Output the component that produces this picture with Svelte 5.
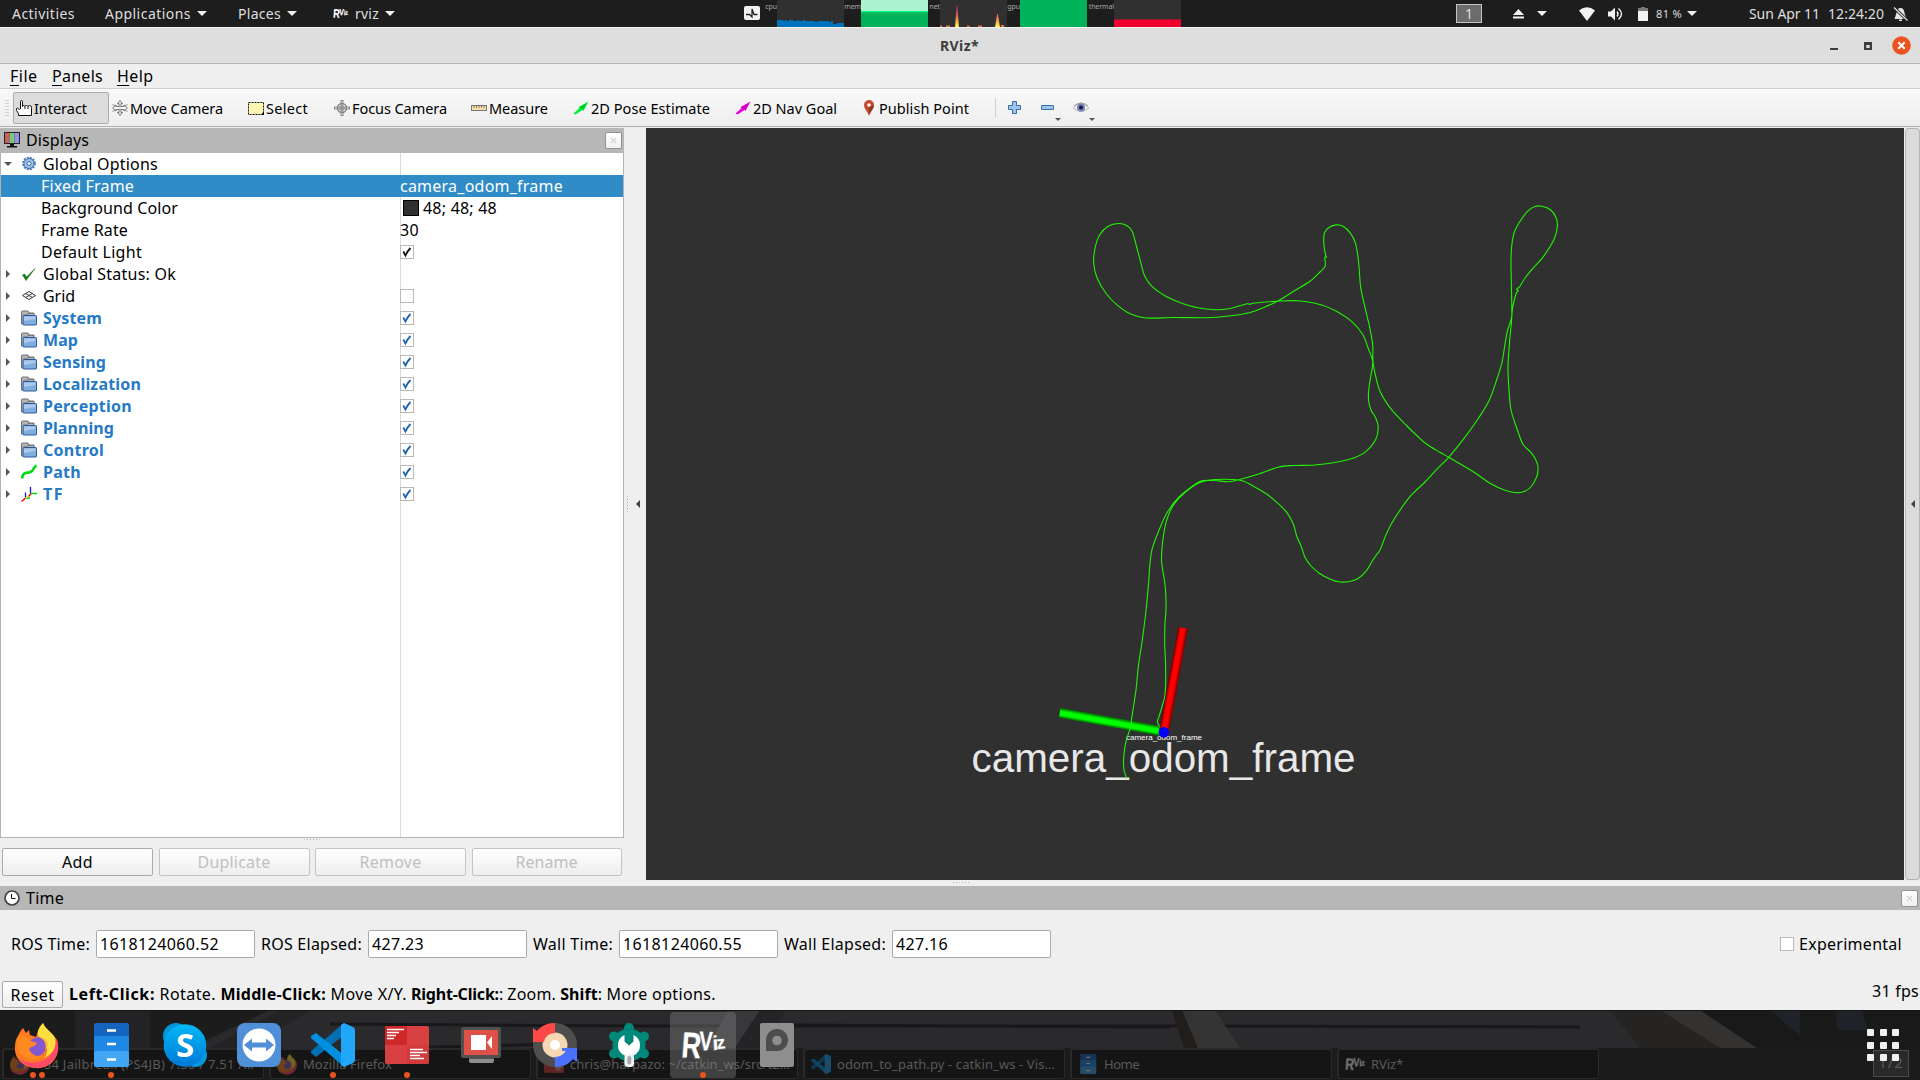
<script>
  function fit(node, width) {
    const natural = node.getBoundingClientRect().width;
    const count = node.textContent.length;
    if (width && count) node.style.letterSpacing = `${(width - natural) / count}px`;
  }

  const tools = [
    { id: 'hand', label: 'Interact', w: 53, box: 96 },
    { id: 'move', label: 'Move Camera', w: 93, box: 136 },
    { id: 'select', label: 'Select', w: 42, box: 86 },
    { id: 'focus', label: 'Focus Camera', w: 95, box: 137 },
    { id: 'ruler', label: 'Measure', w: 59, box: 102 },
    { id: 'pose', label: '2D Pose Estimate', w: 119, box: 162 },
    { id: 'goal', label: '2D Nav Goal', w: 84, box: 126 },
    { id: 'pin', label: 'Publish Point', w: 90, box: 137 }
  ];

  const rows = [
    { label: 'Global Options', w: 115, icon: 'gear', open: true },
    { label: 'Fixed Frame', w: 93, child: true, value: 'camera_odom_frame', vw: 163, selected: true },
    { label: 'Background Color', w: 137, child: true, value: '48; 48; 48', vw: 74, swatch: true },
    { label: 'Frame Rate', w: 87, child: true, value: '30', vw: 19 },
    { label: 'Default Light', w: 101, child: true, check: 'dark' },
    { label: 'Global Status: Ok', w: 133, icon: 'ok' },
    { label: 'Grid', w: 32, icon: 'grid', check: 'empty' },
    { label: 'System', w: 59, icon: 'folder', check: 'blue', bold: true },
    { label: 'Map', w: 35, icon: 'folder', check: 'blue', bold: true },
    { label: 'Sensing', w: 63, icon: 'folder', check: 'blue', bold: true },
    { label: 'Localization', w: 98, icon: 'folder', check: 'blue', bold: true },
    { label: 'Perception', w: 89, icon: 'folder', check: 'blue', bold: true },
    { label: 'Planning', w: 71, icon: 'folder', check: 'blue', bold: true },
    { label: 'Control', w: 61, icon: 'folder', check: 'blue', bold: true },
    { label: 'Path', w: 38, icon: 'path', check: 'blue', bold: true },
    { label: 'TF', w: 21, icon: 'tf', check: 'blue', bold: true }
  ];

  const times = [
    { label: 'ROS Time:', w: 79, value: '1618124060.52', vw: 119 },
    { label: 'ROS Elapsed:', w: 101, value: '427.23', vw: 52 },
    { label: 'Wall Time:', w: 80, value: '1618124060.55', vw: 119 },
    { label: 'Wall Elapsed:', w: 102, value: '427.16', vw: 52 }
  ];

  const tasks = [
    { icon: 'firefox', label: 'PS4 Jailbreak (PS4JB) 7.50 / 7.51 /…', w: 218 },
    { icon: 'firefox', label: 'Mozilla Firefox', w: 89 },
    { icon: 'term', label: 'chris@harpazo: ~/catkin_ws/src/t2…', w: 220 },
    { icon: 'code', label: 'odom_to_path.py - catkin_ws - Vis…', w: 218 },
    { icon: 'files', label: 'Home', w: 35 },
    { icon: 'rviz', label: 'RViz*', w: 32 }
  ];

  const dock = [
    { icon: 'firefox', dots: 2 },
    { icon: 'files', dots: 1 },
    { icon: 'skype', dots: 0 },
    { icon: 'teamviewer', dots: 0 },
    { icon: 'code', dots: 1 },
    { icon: 'term', dots: 1 },
    { icon: 'recorder', dots: 0 },
    { icon: 'sync', dots: 0 },
    { icon: 'tweak', dots: 0 },
    { icon: 'rviz', dots: 1, active: true },
    { icon: 'disk', dots: 0 }
  ];

  const cpu = [7, 7, 7, 6, 7, 6, 7, 7, 6, 6, 7, 6, 6, 7, 6, 6, 6, 6, 6, 5, 6, 6, 6, 6, 6, 6, 5, 6, 3, 3, 4, 4, 4];
  const cpuPath = 'M0 27' + cpu.map((v, i) => `L${i * 2} ${27 - v}L${i * 2 + 2} ${27 - v}`).join('') + 'L67 23V27Z';

  const track = [
    1163,730, 1158.7,725, 1157.5,721.5, 1159.5,715, 1162.5,705, 1164.7,697, 1165.7,682, 1165.5,663, 1164.7,643, 1165,623,
    1166,610, 1165.7,593, 1164.7,582, 1162.7,570, 1161.5,560, 1162.3,545, 1164,532, 1166.7,520, 1171.7,508,
    1178.3,499, 1186.7,491, 1196.7,484, 1205,481, 1215,479.5, 1233,479.5, 1243,481, 1253,486, 1266.7,494,
    1276.7,502.3, 1286.7,512.3, 1293.3,524, 1296.7,536, 1301.3,546.7, 1305,557.3, 1311,566, 1320,573.7,
    1330,579, 1338.3,581.8, 1348.3,581.7, 1357.7,578.7, 1366.7,570.3, 1373.3,559.3, 1380,550, 1385,537.3,
    1391.7,523.3, 1401.7,507.7, 1411.7,494.7, 1425,482, 1436.7,469.3, 1448.7,457.3, 1464.6,437.7,
    1478.4,418.3, 1489.4,400, 1496.6,380, 1501.8,363.3, 1504.6,346.7, 1507.3,331.7, 1511.4,318.3,
    1512.8,306.7, 1516.3,293, 1518.5,290.500, 1516.500,289.500, 1519.7,286.7, 1524.9,278.3, 1533.5,267.7, 1542,258.3, 1549,248.3,
    1554.5,238.3, 1557.4,226, 1555.9,217.3, 1550.7,210, 1542,206.3, 1535,206.5, 1528.3,210.7, 1520.4,220.7,
    1514.5,231.7, 1511.8,245, 1511,260, 1511.4,286.7, 1511.8,316.7, 1509.7,340, 1508,366.7, 1509,390,
    1511,410, 1516.3,426.7, 1523,444.3, 1531.8,453.3, 1537.3,463.3, 1538,470, 1536.7,476.7, 1531.7,486,
    1525,491.3, 1516.7,492.7, 1505,490.3, 1490,483.3, 1473.3,471.7, 1448.7,457.3, 1440,452.3, 1426.7,444.3,
    1418.3,437, 1406,425, 1390.6,408.3, 1380.2,391.7, 1375.4,375, 1373,361.7, 1372.7,345, 1369.9,328.3,
    1364.8,306.7, 1360.6,286.7, 1358.6,261.7, 1355.5,243.3, 1350,232.7, 1343,226.3, 1336.5,224.9,
    1329.3,227.3, 1324.5,232.7, 1323.8,243.3, 1325.5,255, 1326.5,257, 1324.8,257.3, 1325.2,266, 1320,272,
    1310.3,281, 1294,291, 1278,301, 1263.2,307.7, 1249.4,312.7, 1228.7,316, 1206.3,317.7, 1173.6,317.5,
    1146,318, 1130.6,314, 1117.9,305.7, 1106.5,294, 1097.2,278.3, 1093.7,263.3, 1095,248.3, 1099.6,235,
    1108.2,226.3, 1118.5,223.5, 1127,225.7, 1132.3,231.7, 1136.4,246, 1141,263.3, 1145,276.7, 1153,287.3,
    1166.7,296.7, 1180.5,302.7, 1197.7,307.7, 1215,309.7, 1228.7,308.7, 1247,303.7, 1250,304.3, 1252.8,303.3,
    1280.4,301, 1301,301, 1321.7,305, 1339,312.7, 1352.7,322.3, 1363,335, 1368.2,348.3, 1372.7,361.7,
    1371,375, 1368.9,388.3, 1368.5,400, 1371,410, 1375.4,417.3, 1378.2,426.7, 1375.8,439.3, 1365.8,451.7,
    1354.4,457.7, 1339,461.7, 1314.8,465, 1294,465.5, 1278.7,467, 1258,474.3, 1241.5,479, 1228.7,481.7,
    1215,480.5, 1201.7,480.9, 1191.7,486.7, 1178.3,497.7, 1167.3,512.3, 1160,527.7, 1152.3,548.3,
    1150,563.3, 1148.3,586.7, 1145.7,613.3, 1142.3,640, 1138.3,666.7, 1136,690, 1131.7,718.3, 1130.7,726.7,
    1126,741.7, 1123.7,756.7, 1124,770, 1126.7,778.3
  ];

  // Catmull-Rom spline through the positions, written as cubic segments.
  function spline(flat) {
    const p = [];
    for (let i = 0; i < flat.length; i += 2) p.push([flat[i], flat[i + 1]]);
    let d = `M${p[0][0]} ${p[0][1]}`;
    for (let i = 0; i < p.length - 1; i++) {
      const a = p[Math.max(i - 1, 0)], b = p[i], c = p[i + 1], e = p[Math.min(i + 2, p.length - 1)];
      const seg = Math.hypot(c[0] - b[0], c[1] - b[1]);
      const t1 = Math.min(1 / 6, seg / 3 / (Math.hypot(c[0] - a[0], c[1] - a[1]) || 1));
      const t2 = Math.min(1 / 6, seg / 3 / (Math.hypot(e[0] - b[0], e[1] - b[1]) || 1));
      d += `C${(b[0] + (c[0] - a[0]) * t1).toFixed(2)} ${(b[1] + (c[1] - a[1]) * t1).toFixed(2)} ` +
        `${(c[0] - (e[0] - b[0]) * t2).toFixed(2)} ${(c[1] - (e[1] - b[1]) * t2).toFixed(2)} ${c[0]} ${c[1]}`;
    }
    return d;
  }
  const trackPath = spline(track);
</script>

{#snippet appIcon(kind)}
  <svg class="app-icon" viewBox="0 0 44 44">
    {#if kind === 'firefox'}
      <path d="M3 13C5 9 6 7 8 5L11 10L14 7L15 12L21 14L23 8L28 0C30 6 37 9 42 17C46 29 40 45 22 45C8 45 -1 35 0 24C0 19 1 16 3 13Z" fill="#ff7a22" />
      <path d="M42 17C46 30 38 45 22 45C14 45 7 41 3 35C14 43 30 40 36 31C41 24 40 14 42 17Z" fill="#ff4a67" />
      <path d="M28 0C22 6 21 12 26 16C33 22 34 29 29 35C38 31 42 24 40 15C37 9 31 7 28 0Z" fill="#ffde3f" />
      <path d="M14 20C18 13 27 12 30 19C33 26 28 33 22 33C16 32 12 28 13 23Z" fill="#8557cf" />
      <path d="M3 14C8 12 14 13 16 18L22 20C20 24 16 23 14 26C16 31 20 34 27 33C21 39 9 36 4 29C2 24 1 18 3 14Z" fill="#ff8a20" />
      <path d="M24 14C30 16 32 22 30 27C36 22 33 15 24 14Z" fill="#ffb92e" />
    {:else if kind === 'files'}
      <rect x="5" y="0" width="35" height="44" rx="2" fill="#1565c0" />
      <path d="M5 15Q5 13 7 13H38Q40 13 40 15V30H5Z" fill="#1e88e5" />
      <path d="M5 30Q5 28 7 28H38Q40 28 40 30V42Q40 44 38 44H7Q5 44 5 42Z" fill="#42a5f5" />
      <path d="M18 7.500H27M18 21H27M18 36.500H27" stroke="#fff" stroke-width="2.500" />
    {:else if kind === 'skype'}
      <defs><linearGradient id="skype" x2="0" y2="1"><stop offset="0" stop-color="#00b8f5" /><stop offset="1" stop-color="#0078d7" /></linearGradient></defs>
      <circle cx="13" cy="13" r="13" fill="#0094d8" /><circle cx="32" cy="32" r="12" fill="#009ade" />
      <circle cx="22" cy="22.500" r="21.300" fill="url(#skype)" />
      <text x="22" y="34" text-anchor="middle" class="skype-s">S</text>
    {:else if kind === 'teamviewer'}
      <rect width="44" height="44" rx="8" fill="#5090d8" /><circle cx="22" cy="22" r="16.500" fill="#fff" />
      <path d="M7 22L15 15.500V19.500H29V15.500L37 22L29 28.500V24.500H15V28.500Z" fill="#5090d8" />
    {:else if kind === 'code'}
      <path d="M33 0V12L5 34L0 30V28Z" fill="#0070b3" /><path d="M0 15V13L5 10L33 32V44Z" fill="#0090df" />
      <path d="M33 0L42 4Q44 5 44 7V37Q44 39 42 40L33 44L30 42V2Z" fill="#21a7f7" />
    {:else if kind === 'term'}
      <rect y="3" width="44" height="38" rx="2" fill="#d84042" /><path d="M0 5Q0 3 2 3H22V22H0Z" fill="#cf2829" />
      <path d="M22 22H44V39Q44 41 42 41H22Z" fill="#d13b3b" />
      <path d="M2 6.500H19M2 9.500H14M2 12.500H11M2 15.500H9M25 26.500H38M25 29.500H42M25 32.500H35M25 35.500H39" stroke="#fff" stroke-width="1.400" />
    {:else if kind === 'recorder'}
      <rect x="2" y="4" width="40" height="31" rx="2" fill="#505050" /><rect x="5" y="7" width="34" height="25" fill="#de5148" />
      <path d="M12 12H27V27H12ZM28 19.500L33 13V26Z" fill="#fff" /><path d="M10 35.500H35V38Q35 40 33 40H12Q10 40 10 38Z" fill="#8e8e8e" />
    {:else if kind === 'sync'}
      <circle cx="22" cy="22" r="17" fill="none" stroke="#4e4e4e" stroke-width="10" />
      <circle cx="22" cy="22" r="12.500" fill="#f5d7b4" /><circle cx="22" cy="22" r="5" fill="#fff" />
      <path d="M22 0V10C17 10 12 13 11 19H0V5L4 8C8 3 14 0 22 0Z" fill="#ff4848" />
      <path d="M22 44V34C27 34 31 31 33 28H29V25H44V39L40 36C36 41 30 44 22 44Z" fill="#4a70ff" />
    {:else if kind === 'tweak'}
      <circle cx="22" cy="22" r="16.500" fill="#00897b" />
      <path d="M22 5V39M7 13.500L37 30.500M7 30.500L37 13.500" stroke="#00897b" stroke-width="10" stroke-linecap="round" />
      <path d="M17.500 12V18.500L22 22.500L26.500 18.500V12A11.300 11.300 0 0 1 26.500 32.500L25.500 33.500H18.500L17.500 32.500A11.300 11.300 0 0 1 17.500 12Z" fill="#fff" />
      <rect x="17.500" y="31" width="9.500" height="13" rx="3.500" fill="#f2f2f2" /><rect x="20.300" y="33" width="4" height="8.500" rx="2" fill="#aaa" />
    {:else if kind === 'rviz'}
      <g class="rviz-shadow"><text transform="translate(-1 35) rotate(4) scale(.82 1.1)" font-size="33">R</text><text transform="translate(17 28) rotate(2) scale(.75 1)" font-size="27">V</text><text transform="translate(31 28) rotate(-3)" font-size="20">i</text><text transform="translate(35 27) rotate(-6)" font-size="18">z</text></g>
      <g class="rviz-face"><text transform="translate(0 34) rotate(4) scale(.82 1.1)" font-size="33">R</text><text transform="translate(18 27) rotate(2) scale(.75 1)" font-size="27">V</text><text transform="translate(32 27) rotate(-3)" font-size="20">i</text><text transform="translate(36 26) rotate(-6)" font-size="18">z</text></g>
    {:else if kind === 'disk'}
      <rect x="5" width="34" height="44" rx="2" fill="#8e8e8e" /><path d="M11 28V17A11 11 0 1 1 22 28Z" fill="#4d4d4d" /><circle cx="22" cy="17.500" r="4.800" fill="#8e8e8e" />
    {/if}
  </svg>
{/snippet}

{#snippet toolIcon(kind)}
  <svg class="tool-icon" viewBox="0 0 16 16">
    {#if kind === 'hand'}
      <path d="M4.500 9V1.500Q4.500.5 5.500.5T6.500 1.500V6.500L7.500 5L9 6.500L10.500 5L12 6.500L13.500 5.500Q15.500 5.500 15.500 7.500V15.500H2.500V13.500L.5 10.500V8.500Q1.500 7.500 2.500 8.500L3.500 10M9 6.500V9M12 6.500V9" fill="#fff" stroke="#111" />
    {:else if kind === 'move'}
      <g fill="#f4f4f4" stroke="#666" stroke-width=".9"><path d="M8 .5L10.500 3.500H9V6.500H12V5L15.500 8L12 11V9.500H9V12.500H10.500L8 15.500L5.500 12.500H7V9.500H4V11L.5 8L4 5V6.500H7V3.500H5.500Z" /><path d="M.5 4.500Q8 9 15.500 4.500M.5 11.500Q8 7 15.500 11.500" fill="none" stroke="#888" /></g>
    {:else if kind === 'select'}
      <rect x=".5" y="2.500" width="15" height="12" fill="#fdf6b2" stroke="#111" stroke-dasharray="2 1" /><path d="M16 11V15H13Z" />
    {:else if kind === 'focus'}
      <g fill="none" stroke="#888"><path d="M8 0V16M0 8H16" stroke-width="3" /><path d="M8 1V15M1 8H15" stroke="#f2f2f2" /><circle cx="8" cy="8" r="4.500" stroke-width="1.500" /><path d="M5 8H11M8 5V11" stroke="#777" /></g>
    {:else if kind === 'ruler'}
      <rect x=".5" y="5.500" width="15" height="5" fill="#f5dfa5" stroke="#777" /><path d="M3 5V8M5.500 5V8M8 5V8M10.500 5V8M13 5V8" stroke="#666" stroke-width=".8" />
    {:else if kind === 'pose' || kind === 'goal'}
      <g fill={kind === 'pose' ? '#00f03a' : '#f000e0'}><path d="M.5 13.500L6.500 8L5.500 7L15.500 1.500L10.500 11L9.500 10L2.500 14.500Z" /></g><path d="M6 8L14 3L10 9Z" opacity=".2" />
    {:else if kind === 'pin'}
      <path d="M8 16C7 12 3 9 3 5A5 5 0 0 1 13 5C13 9 9 12 8 16Z" fill="#c9492f" /><path d="M8 15C10 11 12.500 9 13 5L8 7Z" fill="#8b3c24" /><circle cx="8" cy="5" r="1.800" fill="#fff" />
    {/if}
  </svg>
{/snippet}

{#snippet rowIcon(kind)}
  <svg class="row-icon" viewBox="0 0 16 16">
    {#if kind === 'gear'}
      <circle cx="8" cy="7.500" r="5.800" fill="none" stroke="#4a78b5" stroke-width="2" stroke-dasharray="2 1.040" /><circle cx="8" cy="7.500" r="5" fill="#9fc0e8" stroke="#4573ad" /><circle cx="8" cy="7.500" r="2" fill="#e8f0fa" stroke="#4573ad" />
    {:else if kind === 'ok'}
      <path d="M1.500 9L5 14.500L14 2.500L5.500 11L3.500 8Z" fill="#187818" stroke="#187818" stroke-width=".6" />
    {:else if kind === 'grid'}
      <path d="M1.500 7.500L8 3.500L14.500 7.500L8 11.500ZM4.700 5.500L11.300 9.500M4.700 9.500L11.300 5.500" fill="none" stroke="#333" />
    {:else if kind === 'folder'}
      <path d="M.5 14V2Q.5 1 1.500 1H7L8 3H13V14Z" fill="#b5b5b5" stroke="#666" stroke-width=".9" /><path d="M2 5H6L7 3.500H13" fill="none" stroke="#777" />
      <rect x="2" y="5.500" width="13.500" height="9.500" rx=".7" fill="#81acde" stroke="#2b5b9d" /><path d="M3 6.500H14.500V9L3 11Z" fill="#adcaed" />
    {:else if kind === 'path'}
      <path d="M1 14.500C2 8 5 9 8 8.500C13 8 12 3 15.500 1.500" fill="none" stroke="#00da10" stroke-width="2.600" />
    {:else if kind === 'tf'}
      <g fill="none" stroke-width="1.300"><path d="M9.500 7V1M4.500 11.500V6.500" stroke="#1515d8" /><path d="M9.500 7.500H16M4.500 12H9" stroke="#00d800" /><path d="M10 7.500L7.500 10.500M4.500 12L.5 15.500" stroke="#e00" /><path d="M7.500 10.500L4.500 12" stroke="#f0d000" /></g>
    {/if}
  </svg>
{/snippet}

<div class="screen">
  <header class="topbar">
    <nav class="top-menu">
      <span class="activities"><span use:fit={63}>Activities</span></span>
      <span class="top-item apps"><span use:fit={86}>Applications</span><i class="caret"></i></span>
      <span class="top-item places"><span use:fit={43}>Places</span><i class="caret"></i></span>
      <span class="top-item current"><span class="mini-logo">{@render appIcon('rviz')}</span><span use:fit={24}>rviz</span><i class="caret"></i></span>
    </nav>
    <div class="monitors">
      <svg class="pulse" viewBox="0 0 16 14"><rect width="16" height="14" rx="2" fill="#f2f2f2" /><path d="M2 8.500H5.500L8 11V3L10 8.500H13.500" fill="none" stroke="#222" stroke-width="1.300" /></svg>
      <span class="metric m-cpu">cpu</span>
      <svg class="graph" viewBox="0 0 67 27"><rect width="67" height="27" fill="#303030" /><path d={cpuPath} fill="#0072bc" /></svg>
      <span class="metric m-mem">mem</span>
      <svg class="graph" viewBox="0 0 67 27"><rect width="67" height="27" fill="#aaf5d0" /><rect y="11.500" width="67" height="16" fill="#00b35b" /><rect y="11" width="67" height="1.300" fill="#00ff82" /></svg>
      <span class="metric m-net">net</span>
      <svg class="graph" viewBox="0 0 67 27"><defs><linearGradient id="net" x2="0" y2="1"><stop offset="0" stop-color="#7a2060" /><stop offset=".5" stop-color="#f26d4f" /><stop offset="1" stop-color="#fff44f" /></linearGradient></defs><rect width="67" height="27" fill="#303030" /><path d="M15.500 27L17 5L18.500 27ZM55.500 27L57.500 14L59.500 27Z" fill="url(#net)" stroke="url(#net)" stroke-width=".8" /><path d="M0 25.500H2V27H0ZM6 25.500H10V27H6ZM27 25.500H29.500V27H27ZM38 25.500H42V27H38ZM61 25H64V27H61Z" fill="#f26d4f" /></svg>
      <span class="metric m-gpu">gpu</span>
      <svg class="graph" viewBox="0 0 67 27"><rect width="67" height="27" fill="#00b35b" /></svg>
      <span class="metric m-thermal">thermal</span>
      <svg class="graph" viewBox="0 0 67 27"><rect width="67" height="27" fill="#303030" /><rect y="19.500" width="67" height="7.500" fill="#f2002e" /></svg>
    </div>
    <div class="status">
      <span class="workspace">1</span>
      <svg class="eject" viewBox="0 0 11 10"><path d="M5.500 0L11 6H0ZM0 7.500H11V9.500H0Z" fill="#f2f2f2" /></svg>
      <i class="caret c1"></i>
      <svg class="wifi" viewBox="0 0 16 14"><path d="M0 3.500Q8-3 16 3.500L8 14Z" fill="#f2f2f2" /></svg>
      <svg class="volume" viewBox="0 0 15 14"><path d="M0 4.500H3L7 .5V13.500L3 9.500H0Z" fill="#f2f2f2" /><path d="M9 4.500Q11 7 9 9.500M10.500 1.500Q16.500 7 10.500 12.500" fill="none" stroke="#f2f2f2" stroke-width="1.400" /></svg>
      <svg class="battery" viewBox="0 0 10 14"><path d="M0 1H3V0H7V1H10V4H0Z" fill="#777" /><rect y="4" width="10" height="10" fill="#f2f2f2" /></svg>
      <span class="percent"><span use:fit={26}>81 %</span></span>
      <i class="caret c2"></i>
      <span class="clock"><span use:fit={71}>Sun Apr 11</span><span use:fit={56}>12:24:20</span></span>
      <svg class="bell" viewBox="0 0 15 14"><path d="M7.500 1Q11 1 11.500 6L13.500 12H1.500L3.500 6Q4 1 7.500 1ZM6 12.500H9V14H6Z" fill="#e5e5e5" /><path d="M1 .5L14.500 13.500" stroke="#1d1d1d" stroke-width="3" /><path d="M1 .5L14.500 13.500" stroke="#e5e5e5" stroke-width="1.200" /></svg>
    </div>
  </header>

  <div class="titlebar">
    <span class="win-title"><span use:fit={39}>RViz*</span></span>
    <div class="win-buttons">
      <svg class="wb-min" viewBox="0 0 8 8"><rect y="6" width="8" height="2" fill="#3d3d3d" /></svg>
      <svg class="wb-max" viewBox="0 0 8 8"><path d="M0 0H8V8H0ZM2.300 3V6H5.700V3Z" fill="#3d3d3d" fill-rule="evenodd" /></svg>
      <svg class="wb-close" viewBox="0 0 19 19"><circle cx="9.500" cy="9.500" r="9.300" fill="#e95420" /><path d="M6.300 6.300L12.700 12.700M12.700 6.300L6.300 12.700" stroke="#fff" stroke-width="2" /></svg>
    </div>
  </div>

  <nav class="menubar">
    <span class="m1"><span use:fit={27.5}><u>F</u>ile</span></span>
    <span class="m2"><span use:fit={51}><u>P</u>anels</span></span>
    <span class="m3"><span use:fit={36.5}><u>H</u>elp</span></span>
  </nav>

  <div class="toolbar">
    <span class="grip"></span>
    {#each tools as t, i}
      <div class="tool" class:pressed={i === 0} style:width="{t.box}px">
        {@render toolIcon(t.id)}<span use:fit={t.w}>{t.label}</span>
      </div>
    {/each}
    <span class="tool-sep"></span>
    <svg class="t-plus" viewBox="0 0 13 13"><path d="M4.500.5H8.500V4.500H12.500V8.500H8.500V12.500H4.500V8.500H.5V4.500H4.500Z" fill="#9cc4ec" stroke="#376daa" /></svg>
    <svg class="t-minus" viewBox="0 0 24 20"><rect x=".5" y="4.500" width="12" height="4" rx=".5" fill="#9cc4ec" stroke="#376daa" /><path d="M14 17H20L17 20Z" fill="#555" /></svg>
    <svg class="t-eye" viewBox="0 0 24 20"><path d="M0 7Q8-3 16 7Q8 14 0 7Z" fill="#eee" stroke="#bbb" /><circle cx="8" cy="6.500" r="4" fill="#7180bc" /><circle cx="8" cy="6.500" r="2" fill="#171b35" /><path d="M1 5Q8-1 15 5" fill="none" stroke="#999" /><path d="M16 17H22L19 20Z" fill="#555" /></svg>
  </div>

  <main class="workarea">
    <section class="displays">
      <div class="panel-title">
        <svg class="monitor" viewBox="0 0 16 16"><rect x=".5" y=".5" width="15" height="11" fill="#111" stroke="#222" /><rect x="1" y="1" width="5" height="10" fill="#be6464" /><rect x="6" y="1" width="4.500" height="10" fill="#78cb79" /><rect x="10.500" y="1" width="4.500" height="10" fill="#9292e6" /><path d="M6 12H10V14H13V15.500H3V14H6Z" fill="#111" /></svg>
        <span class="pt-text" use:fit={63}>Displays</span>
        <span class="close-btn"><svg viewBox="0 0 7 7"><path d="M1 1L6 6M6 1L1 6" stroke="#d4d4d4" stroke-width="1.300" /></svg></span>
      </div>
      <div class="tree">
        {#each rows as r}
          <div class="row" class:selected={r.selected} class:bold={r.bold}>
            <div class="name" class:child={r.child}>
              {#if !r.child}
                <i class="expander" class:open={r.open}></i>{@render rowIcon(r.icon)}
              {/if}
              <span use:fit={r.w}>{r.label}</span>
            </div>
            <div class="value">
              {#if r.swatch}<i class="swatch"></i>{/if}
              {#if r.value}<span class="vtext" use:fit={r.vw}>{r.value}</span>{/if}
              {#if r.check}
                <i class="checkbox">
                  {#if r.check !== 'empty'}
                    <svg viewBox="0 0 12 12"><path d="M2.300 5.500L4.500 9.500Q6.500 5 9.500 2" fill="none" stroke={r.check === 'dark' ? '#111' : '#1f62ad'} stroke-width="1.800" /></svg>
                  {/if}
                </i>
              {/if}
            </div>
          </div>
        {/each}
        <div class="row filler"><div class="name"></div><div class="value"></div></div>
      </div>
      <span class="h-grip"></span>
      <div class="buttons">
        <span class="btn"><span use:fit={31}>Add</span></span>
        <span class="btn off"><span use:fit={73}>Duplicate</span></span>
        <span class="btn off"><span use:fit={62}>Remove</span></span>
        <span class="btn off"><span use:fit={62}>Rename</span></span>
      </div>
    </section>
    <div class="splitter"><span class="v-grip"></span><i class="left-arrow"></i></div>
    <svg class="view" viewBox="646 128 1258 752">
      <defs>
        <linearGradient id="red" x2="0" y2="1"><stop offset="0" stop-color="#600" /><stop offset=".3" stop-color="#f00" /><stop offset=".65" stop-color="#f00" /><stop offset="1" stop-color="#700" /></linearGradient>
        <linearGradient id="green" x2="0" y2="1"><stop offset="0" stop-color="#060" /><stop offset=".3" stop-color="#0f0" /><stop offset=".65" stop-color="#0f0" /><stop offset="1" stop-color="#060" /></linearGradient>
      </defs>
      <rect x="646" y="128" width="1258" height="752" fill="#303030" />
      <rect x="0" y="-5" width="106" height="10" fill="url(#green)" transform="translate(1164 731.700) rotate(190.300)" />
      <text class="frame-big" x="971.500" y="771.500" textLength="384">camera_odom_frame</text>
      <text class="frame-small" x="1126" y="740" textLength="76">camera_odom_frame</text>
      <path d={trackPath} fill="none" stroke="#1ff500" stroke-width="1.100" />
      <rect x="0" y="-5" width="105.500" height="10" fill="url(#red)" transform="translate(1164 731.700) rotate(-79.600)" />
      <circle cx="1163.800" cy="732.200" r="5.300" fill="#00f" />
    </svg>
    <div class="right-strip"><i class="left-arrow"></i></div>
  </main>

  <div class="mid-gap"><span class="h-grip"></span></div>

  <section class="time">
    <div class="panel-title">
      <svg class="monitor" viewBox="0 0 16 16"><circle cx="8" cy="8" r="7" fill="#fff" stroke="#444" stroke-width="1.700" /><path d="M7.500 4V8.500H11.500" fill="none" stroke="#111" /></svg>
      <span class="pt-text" use:fit={38}>Time</span>
      <span class="close-btn"><svg viewBox="0 0 7 7"><path d="M1 1L6 6M6 1L1 6" stroke="#d4d4d4" stroke-width="1.300" /></svg></span>
    </div>
    <div class="time-row">
      {#each times as t}
        <label class="tlabel"><span use:fit={t.w}>{t.label}</span></label>
        <span class="field"><span use:fit={t.vw}>{t.value}</span></span>
      {/each}
      <span class="experimental"><i class="checkbox"></i><span use:fit={103}>Experimental</span></span>
    </div>
    <div class="footer">
      <span class="reset"><span use:fit={44}>Reset</span></span>
      <span class="hint"><span use:fit={86}><b>Left-Click:</b></span><span use:fit={61}>&nbsp;Rotate.</span><span use:fit={110}><b>&nbsp;Middle-Click:</b></span><span use:fit={81}>&nbsp;Move X/Y.</span><span use:fit={96}><b>&nbsp;Right-Click:</b>:</span><span use:fit={53}>&nbsp;Zoom.</span><span use:fit={46}><b>&nbsp;Shift</b>:</span><span use:fit={114}>&nbsp;More options.</span></span>
      <span class="fps"><span use:fit={47}>31 fps</span></span>
    </div>
  </section>

  <footer class="desktop">
    <svg class="wood" viewBox="0 0 1920 70" preserveAspectRatio="none">
      <rect width="1920" height="70" fill="#1c1c1d" />
      <path d="M270 0H1620L1760 38H190Z" fill="#2a2a2c" />
      <path d="M75 0H150V38H75ZM210 38L280 0H310L250 38Z" fill="#232325" />
      <path d="M330 14L640 16H1180M400 38L560 34M785 15L1170 17M1200 16L1580 17" fill="none" stroke="#191719" stroke-width="3" />
      <path d="M708 38L728 0H760L735 38Z" fill="#38383a" /><path d="M735 38L760 0H785L765 38Z" fill="#242426" /><path d="M1180 0H1215L1240 38H1195Z" fill="#343435" /><path d="M1172 0H1182L1198 38H1184Z" fill="#211d1b" />
      <path d="M1610 0H1680L1755 38H1640Z" fill="#262423" /><path d="M1660 0H1700L1757 38H1720Z" fill="#333231" />
      <path d="M1700 0H1920V38H1757Z" fill="#191919" /><path d="M1770 0H1800V26ZM1835 0H1862L1868 20H1838Z" fill="#20222a" />
      <path d="M0 38H1920V70H0Z" fill="#1b1b1b" /><path d="M0 .5H1920" stroke="#141414" />
    </svg>
    <div class="taskbar">
      {#each tasks as t}
        <div class="task"><span class="task-icon">{@render appIcon(t.icon)}</span><span use:fit={t.w}>{t.label}</span></div>
      {/each}
      <span class="pager">1/2</span>
    </div>
    <div class="dock">
      {#each dock as d}
        <div class="dock-item" class:active={d.active}>
          {@render appIcon(d.icon)}
          <div class="dots">{#each { length: d.dots } as _}<i></i>{/each}</div>
        </div>
      {/each}
      <div class="app-grid">{#each { length: 9 } as _}<i></i>{/each}</div>
    </div>
  </footer>
</div>

<style>
  :global(body) { margin: 0; background: #efefef; overflow: hidden; }
  .screen { width: 1920px; height: 1080px; display: flex; flex-direction: column; overflow: hidden; background: #efefef; color: #000; font-family: "Noto Sans", "Open Sans", sans-serif; font-size: 16px; line-height: 20px; white-space: nowrap; }
  .screen * { box-sizing: border-box; }
  svg { display: block; flex: none; }
  span { flex: none; }

  .topbar { height: 27px; flex: none; display: grid; grid-template-columns: 744px 712px 464px; align-items: center; background: #1d1d1d; color: #dfdfdf; font-size: 14px; }
  .top-menu, .monitors, .status, .top-item { display: flex; align-items: center; }
  .activities { margin-left: 12px; width: 93px; }
  .apps { width: 133px; }
  .places { width: 94px; }
  .top-item { gap: 6px; }
  .caret { flex: none; border: 5px solid transparent; border-top: 5px solid #f0f0f0; border-bottom: 0; }
  .mini-logo { width: 17px; height: 15px; margin-top: -1px; }
  .mini-logo .app-icon { width: 15px; height: 15px; margin-left: 1px; }
  .monitors { height: 27px; align-items: flex-start; }
  .pulse { width: 16px; height: 14px; margin-top: 6px; }
  .metric { font-size: 7px; line-height: 13px; text-align: right; color: #a9a9a9; letter-spacing: -.1px; direction: rtl; }
  .m-cpu { width: 17px; }
  .m-mem { width: 17px; }
  .m-net { width: 12px; }
  .m-gpu { width: 13px; }
  .m-thermal { width: 27px; }
  .graph { width: 67px; height: 27px; }
  .workspace { width: 26px; height: 19px; border: 1px solid #c5c5c5; background: #6c6c6c; text-align: center; line-height: 17px; }
  .eject { width: 11px; height: 10px; margin-left: 31px; }
  .c1 { margin-left: 13px; }
  .wifi { width: 16px; height: 14px; margin-left: 32px; }
  .volume { width: 15px; height: 14px; margin-left: 13px; }
  .battery { width: 10px; height: 14px; margin-left: 15px; }
  .percent { margin-left: 8px; font-size: 11px; }
  .c2 { margin-left: 5px; }
  .clock { display: flex; gap: 8px; margin-left: 52px; }
  .bell { width: 15px; height: 14px; margin-left: 9px; }

  .titlebar { height: 37px; flex: none; display: grid; grid-template-columns: 940px 890px auto; align-items: center; background: #dedede; border-top: 1px solid #f3f3f3; border-bottom: 1px solid #b5b5b5; }
  .win-title { grid-column: 2; font-size: 14px; font-weight: 700; color: #3d3d3d; }
  .win-buttons { display: flex; align-items: center; }
  .wb-min, .wb-max { width: 8px; height: 8px; }
  .wb-max { margin-left: 26px; }
  .wb-close { width: 19px; height: 19px; margin-left: 20px; }

  .menubar { height: 25px; flex: none; display: flex; align-items: center; padding-left: 10px; background: #efefef; border-bottom: 1px solid #cfcfcf; }
  .menubar u { text-underline-offset: 3px; text-decoration-thickness: 1px; }
  .m1 { width: 42px; }
  .m2 { width: 65px; }

  .toolbar { height: 38px; flex: none; display: flex; align-items: center; background: linear-gradient(#f9f9f9, #eee); border-bottom: 1px solid #b0b0b0; font-size: 14.500px; }
  .grip { width: 4px; height: 17px; margin: 0 4px 0 5px; background: radial-gradient(circle, #bbb 40%, transparent 50%) 0 0 / 2px 3px; opacity: .6; }
  .tool { height: 32px; flex: none; display: flex; align-items: center; gap: 2px; padding-left: 2px; border: 1px solid transparent; border-radius: 2px; }
  .tool.pressed { background: #dcdcdc; border-color: #acacac; }
  .tool-icon { width: 16px; height: 16px; }
  .tool-sep { width: 1px; height: 19px; background: #cfcfcf; margin: 0 12px 0 0; }
  .t-plus { width: 13px; height: 13px; }
  .t-minus { width: 24px; height: 20px; margin-left: 20px; margin-top: 6px; }
  .t-eye { width: 24px; height: 20px; margin-left: 8px; margin-top: 6px; }

  .workarea { height: 753px; flex: none; display: grid; grid-template-columns: 624px 22px 1258px 16px; padding-top: 1px; }
  .displays { display: flex; flex-direction: column; }
  .panel-title { height: 25px; flex: none; display: flex; align-items: center; background: #b7b7b7; padding: 0 2px 1px 4px; }
  .monitor { width: 16px; height: 16px; margin-right: 6px; }
  .close-btn { width: 17px; height: 17px; margin-left: auto; display: flex; align-items: center; justify-content: center; border: 1px solid #929292; border-radius: 2px; background: linear-gradient(#fff, #f0f0f0); }
  .close-btn svg { width: 7px; height: 7px; }
  .tree { height: 685px; flex: none; display: flex; flex-direction: column; background: #fff; border: 1px solid #b3b3b3; border-top: 0; }
  .row { height: 22px; flex: none; display: grid; grid-template-columns: 399px 1fr; }
  .row.filler { height: auto; flex: 1; }
  .name, .value { display: flex; align-items: center; }
  .name { padding-left: 3px; }
  .value { border-left: 1px solid #dcdcdc; }
  .vtext { margin-left: -1px; }
  .swatch + .vtext { margin-left: 0; }
  .name.child { padding-left: 40px; }
  .selected { background: #308cc6; color: #fff; }
  .selected .value { border-color: #308cc6; }
  .bold .name { font-weight: 700; color: #2579c6; }
  .expander { width: 17px; height: 8px; flex: none; display: flex; }
  .expander::before { content: ""; border: 4px solid transparent; border-left: 4px solid #555; border-right: 0; margin-left: 2px; height: 0; }
  .expander.open::before { border: 4px solid transparent; border-top: 4px solid #555; border-bottom: 0; margin: 2px 0 0 0; }
  .row-icon { width: 16px; height: 16px; margin-right: 6px; }
  .checkbox { width: 14px; height: 14px; flex: none; border: 1px solid #b9b9b9; background: #fff; margin-left: -1px; }
  .checkbox svg { width: 12px; height: 12px; }
  .swatch { width: 16px; height: 16px; margin: 0 4px 0 2px; background: #303030; border: 1px solid #000; }
  .h-grip { width: 18px; height: 1px; background: repeating-linear-gradient(90deg, #b5b5b5 0 1px, transparent 1px 3px); }
  .displays > .h-grip { margin: 1px 0 0 304px; }
  .buttons { display: grid; grid-template-columns: 151px 151px 151px 150px; gap: 5.500px; padding: 8px 0 0 2px; }
  .btn, .reset { display: flex; align-items: center; justify-content: center; height: 28px; border: 1px solid #aaa; border-radius: 2px; background: linear-gradient(#fff, #eee); }
  .btn.off { color: #c0c0c0; border-color: #c4c4c4; }

  .splitter, .right-strip { display: flex; align-items: center; }
  .splitter { padding-left: 3px; }
  .v-grip { width: 1px; height: 17px; background: repeating-linear-gradient(#aaa 0 1px, transparent 1px 3px); }
  .left-arrow { border: 4px solid transparent; border-right: 4px solid #444; border-left: 0; flex: none; }
  .splitter .left-arrow { margin-left: 8px; }
  .view { width: 1258px; height: 752px; }
  .right-strip { margin-left: 1px; border: 1px solid #b5b5b5; border-radius: 3px; background: #dbdbdb; padding-left: 5px; }
  .frame-big { font: 40.400px "Liberation Sans", sans-serif; fill: #e8e8e8; }
  .frame-small { font: 8px "Liberation Sans", sans-serif; fill: #fff; }

  .mid-gap { height: 6px; flex: none; padding: 2px 0 0 953px; }
  .mid-gap .h-grip { display: block; }
  .time { height: 124px; flex: none; }
  .time .panel-title { height: 24px; padding-bottom: 0; }
  .time-row { height: 68px; display: flex; align-items: center; padding-left: 11px; }
  .tlabel { display: flex; margin-right: 6px; }
  .field { width: 159px; height: 28px; margin-right: 6px; padding-left: 3px; display: flex; align-items: center; border: 1px solid #aaa; border-radius: 2px; background: #fff; }
  .experimental { margin-left: auto; display: flex; align-items: center; gap: 5px; padding-right: 18px; }
  .footer { height: 32px; display: flex; align-items: center; padding-left: 2px; }
  .reset { width: 61px; height: 27px; margin-top: 1px; }
  .hint { display: flex; margin-left: 6px; }
  .fps { margin-left: auto; margin-top: -6px; padding-right: 1px; }

  .desktop { height: 70px; flex: none; position: relative; background: #1c1c1c; }
  .wood { position: absolute; inset: 0; width: 1920px; height: 70px; }
  .taskbar { position: absolute; left: 0; right: 0; top: 38px; height: 32px; display: flex; gap: 5px; padding-left: 2px; color: #595959; font-size: 13px; }
  .task { width: 262px; height: 31px; flex: none; display: flex; align-items: center; gap: 6px; padding-left: 6px; background: #151515; border: 1px solid #292929; border-width: 2px 1px 1px 2px; border-radius: 3px; }
  .task-icon { width: 20px; height: 20px; opacity: .38; }
  .task-icon .app-icon { width: 20px; height: 20px; }
  .pager { width: 36px; height: 27px; margin: 2px 0 0 269px; border: 1px solid #4a4a4a; background: #292929; text-align: center; line-height: 22px; font-size: 15px; letter-spacing: 1px; }
  .dock { position: absolute; inset: 0; display: flex; align-items: center; padding-left: 4px; gap: 8px; }
  .dock-item { width: 66px; height: 66px; flex: none; display: flex; flex-direction: column; align-items: center; padding-top: 11px; border-radius: 4px; }
  .dock-item.active { background: rgba(140, 140, 140, .36); }
  .app-icon { width: 44px; height: 44px; overflow: visible; }
  .dots { display: flex; gap: 3px; margin-top: 5px; }
  .dots i { width: 6px; height: 6px; border-radius: 50%; background: #e95420; }
  .app-grid { margin-left: auto; margin-right: 21px; display: grid; grid-template-columns: repeat(3, 7px); grid-auto-rows: 7px; gap: 5.500px; }
  .app-grid i { background: #f0f0f0; border-radius: 1px; }
  .skype-s { font: 700 33px "Noto Sans", sans-serif; fill: #fff; }
  .rviz-shadow, .rviz-face { font-family: "Liberation Sans", sans-serif; font-weight: 700; }
  .rviz-shadow { fill: #777; }
  .rviz-face { fill: #fff; }
</style>
